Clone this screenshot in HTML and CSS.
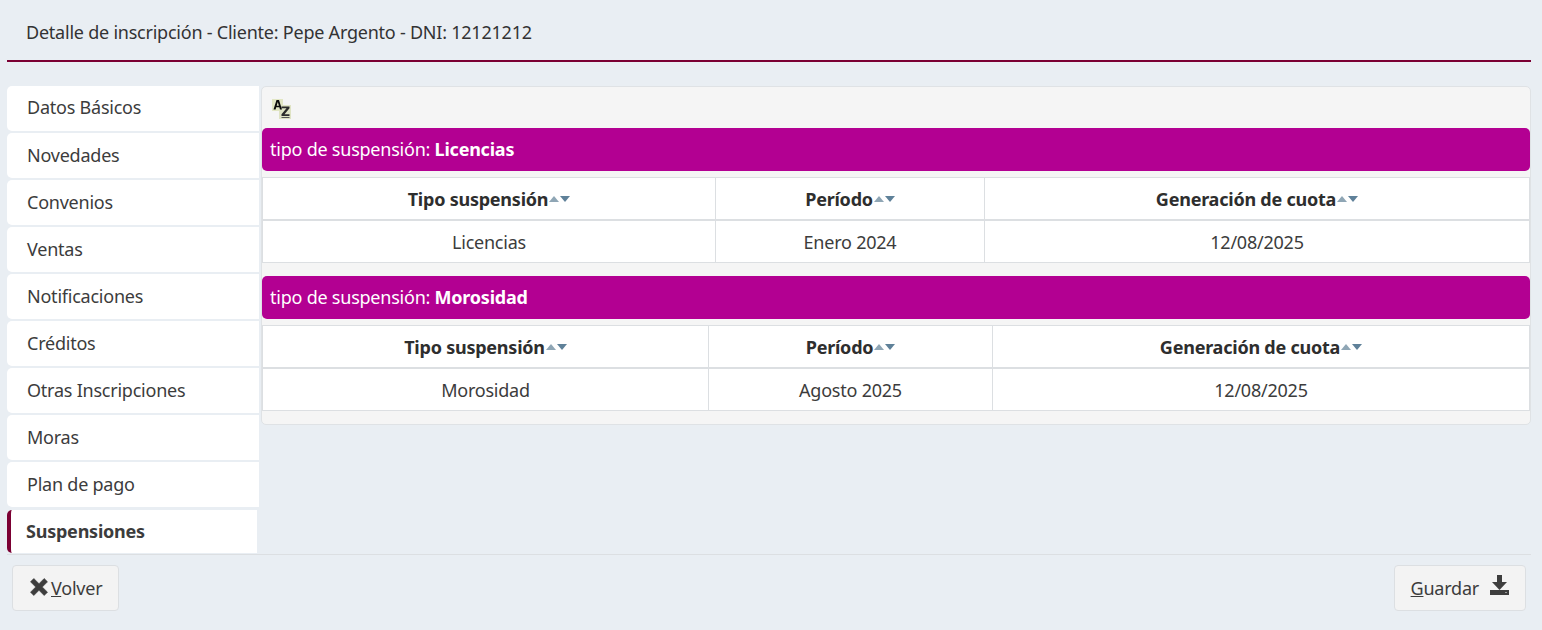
FILE: index.html
```html
<!DOCTYPE html>
<html lang="es">
<head>
<meta charset="utf-8">
<title>Detalle de inscripción</title>
<link rel="stylesheet" href="styles.css">
</head>
<body>
<header class="page-title">Detalle de inscripción - Cliente: Pepe Argento - DNI: 12121212</header>
<main class="content">
  <nav class="tabs">
    <a class="tab">Datos Básicos</a>
    <a class="tab">Novedades</a>
    <a class="tab">Convenios</a>
    <a class="tab">Ventas</a>
    <a class="tab">Notificaciones</a>
    <a class="tab">Créditos</a>
    <a class="tab">Otras Inscripciones</a>
    <a class="tab">Moras</a>
    <a class="tab">Plan de pago</a>
    <a class="tab active">Suspensiones</a>
  </nav>
  <section class="panel">
    <div class="toolbar">
      <svg class="az" width="20" height="20" viewBox="0 0 20 20"><rect x="0" y="0" width="11" height="12" fill="#e2e6c4"/><rect x="7" y="6" width="12" height="14" fill="#dfe3c4"/><path d="M1.500 10.500 4.500 1h2.500l3 9.500H8l-.6-2.200H4.200L3.600 10.500zM4.700 6.700h2.200L5.800 3z" fill="#0c0c0c"/><path d="M9.500 7.500h8v1.700l-5 6h5V17h-8v-1.700l5-6h-5z" fill="#2b2b2b"/><path d="M9.500 18h8v1h-8z" fill="#555"/></svg>
    </div>
    <div class="group-head">tipo de suspensión: <b>Licencias</b></div>
    <table class="grid grid-a">
      <thead><tr>
        <th class="c1"><span class="th">Tipo suspensión<i class="up"></i><i class="down"></i></span></th>
        <th class="c2"><span class="th">Período<i class="up"></i><i class="down"></i></span></th>
        <th><span class="th">Generación de cuota<i class="up"></i><i class="down"></i></span></th>
      </tr></thead>
      <tbody><tr><td>Licencias</td><td>Enero 2024</td><td>12/08/2025</td></tr></tbody>
    </table>
    <div class="group-head second">tipo de suspensión: <b>Morosidad</b></div>
    <table class="grid grid-b">
      <thead><tr>
        <th class="c1"><span class="th">Tipo suspensión<i class="up"></i><i class="down"></i></span></th>
        <th class="c2"><span class="th">Período<i class="up"></i><i class="down"></i></span></th>
        <th><span class="th">Generación de cuota<i class="up"></i><i class="down"></i></span></th>
      </tr></thead>
      <tbody><tr><td>Morosidad</td><td>Agosto 2025</td><td>12/08/2025</td></tr></tbody>
    </table>
  </section>
</main>
<footer class="actions">
  <button class="btn btn-back" type="button">
    <svg class="icon-x" width="18" height="18" viewBox="0 0 18 18"><path d="M3.800 .5 9 5.700 14.200 .5 17.500 3.800 12.300 9 17.500 14.200 14.200 17.500 9 12.300 3.800 17.500 .5 14.200 5.700 9 .5 3.800z" fill="#3d3d3d" stroke="#3d3d3d" stroke-width=".6" stroke-linejoin="round"/></svg>
    <span><u>V</u>olver</span>
  </button>
  <button class="btn btn-save" type="button">
    <span><u>G</u>uardar</span>
    <svg class="icon-save" width="19" height="20" viewBox="0 0 19 20"><path d="M7 0h5v7h5l-7.500 8L2 7h5z" fill="#3d3d3d"/><path d="M0 15h19v5H0z" fill="#3d3d3d"/><path d="M15 17h2v1h-2z" fill="#9a9a9a"/></svg>
  </button>
</footer>
</body>
</html>
```
FILE: styles.css
```css
* { box-sizing: border-box; }
html, body { margin: 0; height: 630px; overflow: hidden; }
body {
  background: #e9eef3;
  color: #3c3c3c;
  font-family: "Noto Sans", sans-serif;
  font-size: 18px;
  letter-spacing: -0.23px;
  padding: 0 11px 0 7px;
}
.page-title {
  height: 62px;
  padding: 20px 0 0 19px;
  line-height: 24px;
  border-bottom: 2px solid #7b0033;
  color: #333;
}
.content {
  display: flex;
  align-items: flex-start;
  margin-top: 24px;
  height: 469px;
  border-bottom: 1px solid #dcdfe2;
}
.tabs { width: 254px; display: flex; flex-direction: column; }
.tab {
  display: block;
  width: 252px;
  height: 45px;
  margin-bottom: 2px;
  padding: 10px 0 0 20px;
  line-height: 24px;
  background: #fff;
  border-radius: 5px 0 0 5px;
}
.tab:first-child { padding-top: 9px; }
.tab.active {
  width: 250px;
  height: 43px;
  margin-top: 1px;
  margin-bottom: 0;
  padding: 9px 0 0 15px;
  border-left: 4px solid #7b0033;
  font-weight: 700;
}
.panel {
  width: 1270px;
  height: 339px;
  background: #f5f5f5;
  border: 1px solid #dfe2e5;
  border-radius: 5px;
}
.toolbar { height: 41px; padding: 12px 0 0 10px; }
.az { display: block; }
.group-head {
  height: 43px;
  padding: 9px 0 0 8px;
  line-height: 24px;
  background: #b30092;
  color: #fff;
  border-radius: 5px;
}
.group-head.second { margin-top: 13px; }
.grid {
  display: table;
  width: 100%;
  margin-top: 6px;
  border-collapse: collapse;
  background: #fff;
  text-align: center;
}
.grid th, .grid td { border: 1px solid #dcdfe2; padding: 1px 0 0; }
.grid th { height: 42px; border-bottom-width: 2px; font-weight: 700; color: #2e2e2e; }
.grid td { height: 43px; }
.grid-a .c1 { width: 453px; }
.grid-a .c2 { width: 269px; }
.grid-b .c1 { width: 446px; }
.grid-b .c2 { width: 284px; }
.th { display: inline-flex; align-items: center; }
.up, .down { width: 0; height: 0; border-left: 5px solid transparent; border-right: 5px solid transparent; margin-left: 1px; }
.up { border-bottom: 6px solid #8fa6b5; }
.down { border-top: 6px solid #5f8199; }
.actions {
  display: flex;
  justify-content: space-between;
  padding: 10px 5px 0 5px;
}
.btn {
  display: inline-flex;
  align-items: center;
  height: 46px;
  background: #f3f3f3;
  border: 1px solid #dcdfe2;
  border-radius: 4px;
  font: inherit;
  letter-spacing: inherit;
  color: #3c3c3c;
}
.btn-back { gap: 3px; padding: 0 16px 0 17px; }
.btn-save { gap: 11px; padding: 0 16px; }
.icon-x { margin-bottom: 2px; }
.icon-save { margin-bottom: 6px; }
```
